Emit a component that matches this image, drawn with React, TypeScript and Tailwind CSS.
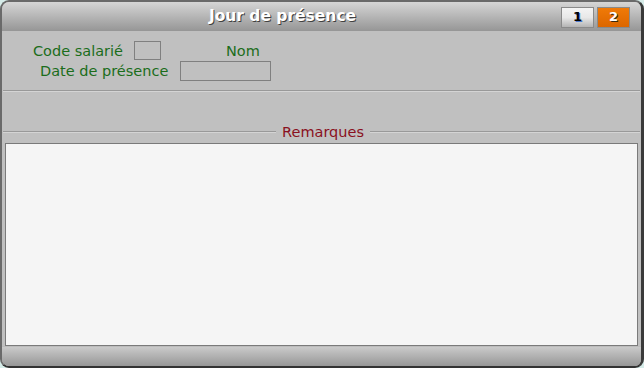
export default function App() {
  const font = { fontFamily: '"DejaVu Sans", Verdana, sans-serif' };
  return (
    <div className="h-[368px] w-[644px] bg-[#d6ece9]" style={font}>
      <div className="flex h-full flex-col overflow-hidden rounded-[9px] border-t-2 border-r-[3px] border-b-[2px] border-l-2 border-t-[#6a6a6a] border-r-[#3a3a3a] border-b-[#333333] border-l-[#6a6a6a] bg-[#c0c0c0]">
        {/* title bar */}
        <div className="flex h-[29px] shrink-0 items-center bg-gradient-to-b from-[#d6d6d6] to-[#969696]">
          <div
            className="flex-1 pl-[2px] text-center text-[15.5px] font-bold text-white"
            style={{ textShadow: "1px 1px 0 #404040" }}
          >
            Jour de présence
          </div>
          <div className="flex gap-[3px] pr-[11px] pt-[1px]">
            <div className="flex h-[21px] w-[33px] items-center justify-center border border-[#8a8a8a] bg-gradient-to-b from-[#f4f4f4] via-[#e8e8e8] to-[#b4b4b4] text-[13px] font-bold text-black" style={{ textShadow: "1px 1px 0 #4a7ad0" }}>
              1
            </div>
            <div className="flex h-[21px] w-[33px] items-center justify-center border border-[#8a8a8a] bg-gradient-to-b from-[#f07a08] to-[#dc6600] text-[13px] font-bold text-white" style={{ textShadow: "1px 1px 0 #3a2a10" }}>
              2
            </div>
          </div>
        </div>

        {/* body */}
        <div className="flex flex-1 flex-col">
          <div className="pt-[10px] text-[14.5px] text-[#1b6d1b]">
            <div className="flex h-[20px] items-start pl-[31px]">
              <span className="whitespace-nowrap leading-[20px]">Code salarié</span>
              <span className="ml-[11px] h-[19px] w-[27px] shrink-0 border border-[#808080]" />
              <span className="ml-[65px] leading-[20px]">Nom</span>
            </div>
            <div className="flex h-[21px] items-start pl-[38px]">
              <span className="whitespace-nowrap leading-[21px]">Date de présence</span>
              <span className="ml-[12px] h-[20px] w-[91px] shrink-0 border border-[#808080]" />
            </div>
          </div>

          <div className="mx-[1px] mt-[8px] h-[2px] border-t border-b border-t-[#999999] border-b-[#d4d4d4]" />

          <div className="mt-[32px] flex h-[16px] items-center">
            <div className="ml-[1px] h-[2px] flex-1 border-t border-b border-t-[#999999] border-b-[#d4d4d4]" />
            <span className="px-[6px] text-[14.5px] leading-[16px] text-[#8a1020]">Remarques</span>
            <div className="mr-[1px] h-[2px] w-[270px] border-t border-b border-t-[#999999] border-b-[#d4d4d4]" />
          </div>

          <div className="mx-[3px] mt-[3px] flex-1 border border-[#7a7a7a] bg-[#f5f5f5]" />
          <div className="h-[1px] bg-[#bcbcbc]" />
        </div>

        {/* bottom bar */}
        <div className="h-[19px] shrink-0 bg-gradient-to-b from-[#cacaca] to-[#979797]" />
      </div>
    </div>
  );
}
